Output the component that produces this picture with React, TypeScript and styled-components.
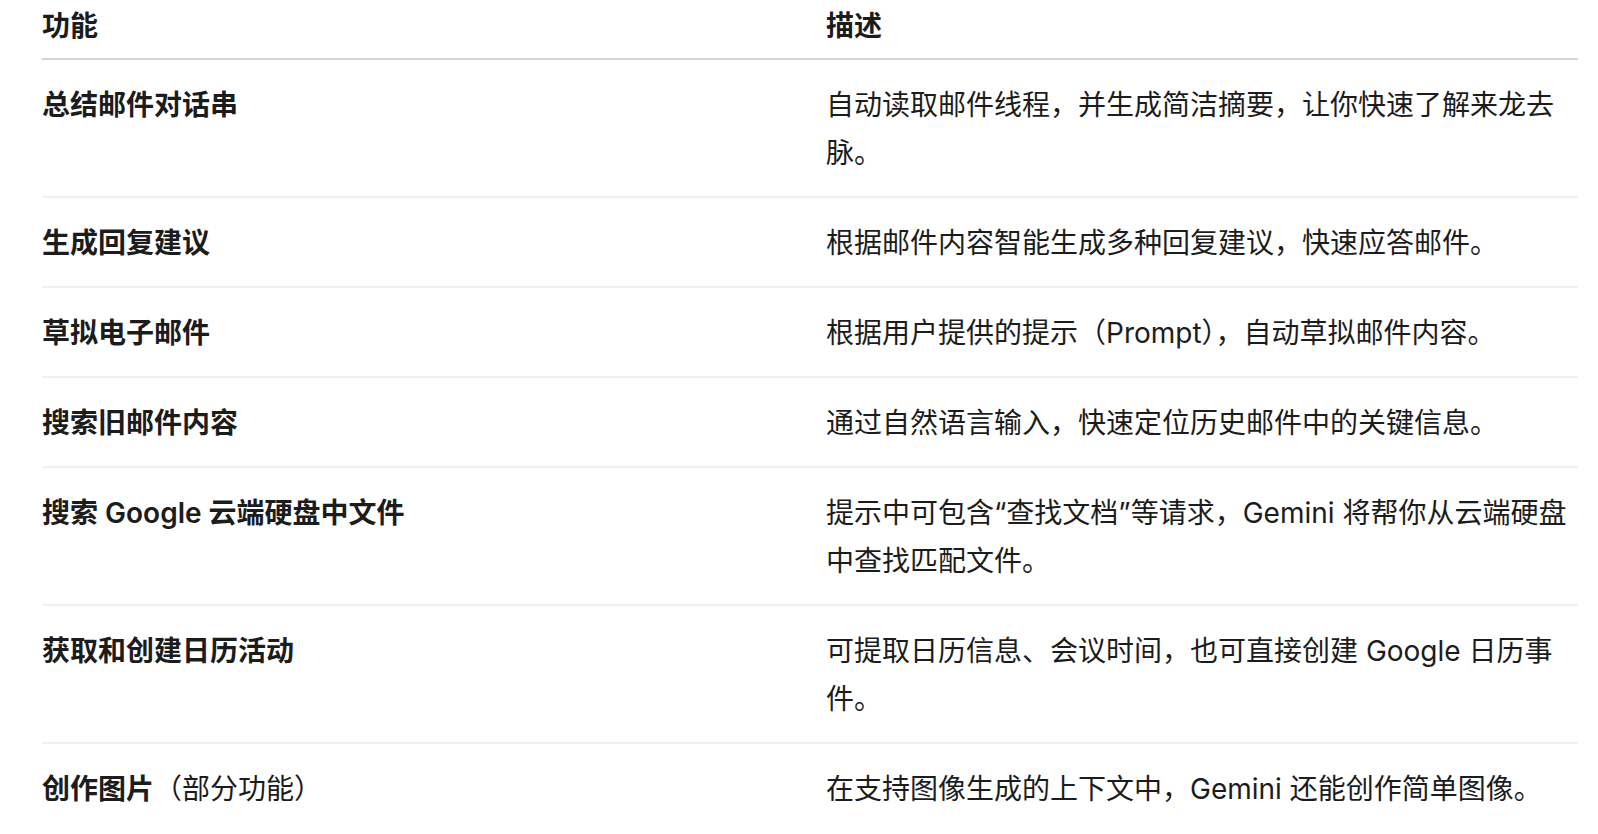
import React from "react";
import styled, { createGlobalStyle } from "styled-components";

const GlobalStyle = createGlobalStyle`
  html, body {
    margin: 0;
    padding: 0;
    background: #ffffff;
  }
  body {
    font-family: Inter, "Noto Sans CJK SC", "Liberation Sans", sans-serif;
    color: #1c1c1c;
    -webkit-font-smoothing: antialiased;
  }
`;

const Page = styled.div`
  padding: 0 20px 0 42px;
`;

const Table = styled.div`
  display: grid;
  grid-template-columns: 784px 1fr;
  width: 1536px;
`;

const HeadCell = styled.div`
  font-size: 28px;
  line-height: 48px;
  font-weight: 600;
  padding: 2px 0 8px;
  border-bottom: 2px solid #d6d6d6;
`;

const Cell = styled.div<{ $last?: boolean }>`
  font-size: 28px;
  line-height: 48px;
  padding: 21px 0 19px;
  border-bottom: ${(p) => (p.$last ? "none" : "2px solid #f0f0f0")};
`;

const FeatureCell = styled(Cell)`
  font-weight: 600;
`;

const Note = styled.span`
  font-weight: 400;
`;

type Row = { name: React.ReactNode; desc: string };

const rows: Row[] = [
  {
    name: "总结邮件对话串",
    desc: "自动读取邮件线程，并生成简洁摘要，让你快速了解来龙去脉。",
  },
  { name: "生成回复建议", desc: "根据邮件内容智能生成多种回复建议，快速应答邮件。" },
  { name: "草拟电子邮件", desc: "根据用户提供的提示（Prompt），自动草拟邮件内容。" },
  { name: "搜索旧邮件内容", desc: "通过自然语言输入，快速定位历史邮件中的关键信息。" },
  {
    name: "搜索 Google 云端硬盘中文件",
    desc: "提示中可包含“查找文档”等请求，Gemini 将帮你从云端硬盘中查找匹配文件。",
  },
  {
    name: "获取和创建日历活动",
    desc: "可提取日历信息、会议时间，也可直接创建 Google 日历事件。",
  },
  {
    name: (
      <>
        创作图片<Note>（部分功能）</Note>
      </>
    ),
    desc: "在支持图像生成的上下文中，Gemini 还能创作简单图像。",
  },
];

const App: React.FC = () => {
  return (
    <>
      <GlobalStyle />
      <Page>
        <Table>
          <HeadCell>功能</HeadCell>
          <HeadCell>描述</HeadCell>
          {rows.map((r, i) => {
            const last = i === rows.length - 1;
            return (
              <React.Fragment key={i}>
                <FeatureCell $last={last}>{r.name}</FeatureCell>
                <Cell $last={last}>{r.desc}</Cell>
              </React.Fragment>
            );
          })}
        </Table>
      </Page>
    </>
  );
};

export default App;
